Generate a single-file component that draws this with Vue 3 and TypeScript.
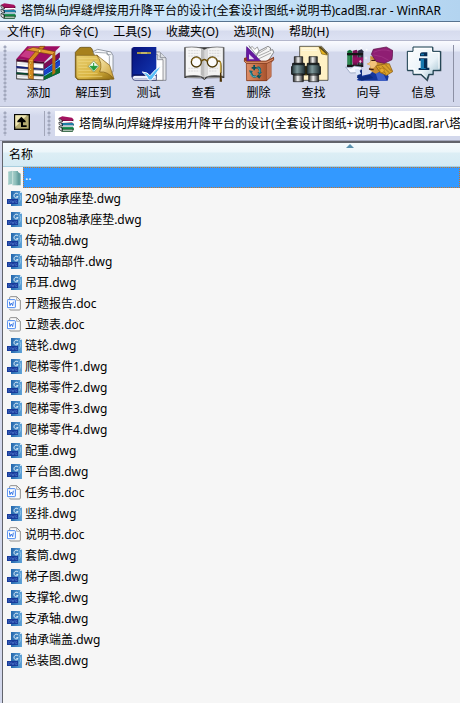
<script setup lang="ts">
interface Tool { id: string; label: string; box: string }
interface Entry { name: string; kind: 'dwg' | 'doc' }

const folder = '塔筒纵向焊缝焊接用升降平台的设计(全套设计图纸+说明书)cad图'
const title = `${folder}.rar - WinRAR`
const path = `${folder}.rar\\${folder}`
const menus: string[] = ['文件(F)', '命令(C)', '工具(S)', '收藏夹(O)', '选项(N)', '帮助(H)']
const tools: Tool[] = [
  { id: 'add', label: '添加', box: '42 18 144 114' },
  { id: 'extract', label: '解压到', box: '207 18 144 114' },
  { id: 'test', label: '测试', box: '27 18 144 114' },
  { id: 'view', label: '查看', box: '192 18 144 114' },
  { id: 'delete', label: '删除', box: '12 18 144 114' },
  { id: 'find', label: '查找', box: '177 18 144 114' },
  { id: 'wizard', label: '向导', box: '12 18 144 114' },
  { id: 'info', label: '信息', box: '177 18 144 114' },
]
const names: string[] = [
  '209轴承座垫.dwg', 'ucp208轴承座垫.dwg', '传动轴.dwg', '传动轴部件.dwg', '吊耳.dwg',
  '开题报告.doc', '立题表.doc', '链轮.dwg', '爬梯零件1.dwg', '爬梯零件2.dwg', '爬梯零件3.dwg',
  '爬梯零件4.dwg', '配重.dwg', '平台图.dwg', '任务书.doc', '竖排.dwg', '说明书.doc', '套筒.dwg',
  '梯子图.dwg', '支撑轮.dwg', '支承轴.dwg', '轴承端盖.dwg', '总装图.dwg',
]
const files: Entry[] = names.map((name) => ({ name, kind: name.endsWith('.doc') ? 'doc' : 'dwg' }))
</script>

<template>
  <div class="window">
    <!-- Shared pictures -->
    <svg class="defs" aria-hidden="true">
      <defs>
        <linearGradient id="g-steel" x1="0" x2="1" y1="0" y2="0">
          <stop offset="0" stop-color="#222" /><stop offset=".45" stop-color="#f4f4f4" /><stop offset="1" stop-color="#1c1c1c" />
        </linearGradient>
        <linearGradient id="g-teal" x1="0" x2="1" y1="0" y2="0">
          <stop offset="0" stop-color="#1c2c30" /><stop offset=".4" stop-color="#7f999c" /><stop offset="1" stop-color="#1b2a2e" />
        </linearGradient>
        <linearGradient id="g-folder" x1="0" x2="1" y1="0" y2="1">
          <stop offset="0" stop-color="#e8cf72" /><stop offset=".6" stop-color="#d8b33f" /><stop offset="1" stop-color="#8e6a10" />
        </linearGradient>
        <linearGradient id="g-flap" x1="0" x2="1" y1="0" y2="1">
          <stop offset="0" stop-color="#fff6c4" /><stop offset="1" stop-color="#c89a2c" />
        </linearGradient>
        <linearGradient id="g-navy" x1="0" x2="1" y1="0" y2="1">
          <stop offset="0" stop-color="#06107a" /><stop offset="1" stop-color="#1238b4" />
        </linearGradient>
        <linearGradient id="g-bin" x1="0" x2="1" y1="0" y2="0">
          <stop offset="0" stop-color="#e09068" /><stop offset="1" stop-color="#a8522c" />
        </linearGradient>
        <linearGradient id="g-info" x1="0" x2="1" y1="0" y2="1">
          <stop offset="0" stop-color="#fff" /><stop offset=".6" stop-color="#e8f2f8" /><stop offset="1" stop-color="#8fb4c4" />
        </linearGradient>
        <linearGradient id="g-dwg" x1="0" x2="1" y1="0" y2="0">
          <stop offset="0" stop-color="#2467ad" /><stop offset="1" stop-color="#5fa3d8" />
        </linearGradient>
        <linearGradient id="g-dir" x1="0" x2="1" y1="0" y2="0">
          <stop offset="0" stop-color="#a9d0cc" /><stop offset=".6" stop-color="#8dbdb9" /><stop offset="1" stop-color="#6aa3a2" />
        </linearGradient>
      </defs>
      <symbol id="books" viewBox="0 0 48 48">
        <path d="M2 6 13 1 42 5 46 10 44 19 12 17Z" fill="#a3125f" />
        <path d="M3 6 12 13 40 15 46 10V16L42 20 12 18Z" fill="#4c0728" />
        <path d="M14 15H46V19H14Z" fill="#fff" />
        <path d="M3 17 12 21H45L48 26 45 31H12L3 24Z" fill="#073c5a" />
        <path d="M14 22H46V26H14Z" fill="#2ba2cf" /><path d="M15 27H45V29H15Z" fill="#fff" />
        <path d="M3 30 12 34H45L48 39 44 47H13L3 40Z" fill="#06451c" />
        <path d="M14 34H46V38H14Z" fill="#17a156" /><path d="M14 41H44V44H14Z" fill="#fff" />
        <path d="M3 6 12 13V19L3 12ZM3 18 12 23V31L3 25ZM3 31 12 36V46L3 40Z" fill="#e8e8ec" stroke="#222" stroke-width="2" />
      </symbol>
      <symbol id="dwg" viewBox="0 0 48 48">
        <path d="M12 0H39L45 6V45H12Z" fill="url(#g-dwg)" />
        <path d="M39 0V6H45Z" fill="#d4e8f6" />
        <path d="M33 9C28 4 21 8 21 14C21 21 30 23 33 17H28" fill="none" stroke="#e6f3fc" stroke-width="3" />
        <path d="M37 8C42 15 42 25 37 32" fill="none" stroke="#8fc2ea" stroke-width="3" />
        <path d="M0 24H33V39H0Z" fill="#173a9a" />
        <path d="M5 28V35H8C12 34 12 29 8 28ZM14 28 16 35 18 30 20 35 22 28M30 29H26V35H30V32" fill="none" stroke="#5078cc" stroke-width="2" />
      </symbol>
      <symbol id="doc" viewBox="0 0 48 48">
        <path d="M8 10V5Q8 2 11 2H29L40 13V39Q40 42 37 42H11Q8 42 8 39" fill="#fbfbfb" stroke="#8c8c8c" stroke-width="3" />
        <path d="M29 2V13H40" fill="none" stroke="#8c8c8c" stroke-width="2" />
        <rect x="1" y="11" width="24" height="24" rx="2" fill="#fff" stroke="#4584ee" stroke-width="3" />
        <path d="M7 17 9 29 13 21 17 29 19 17" fill="none" stroke="#3475e8" stroke-width="3" />
      </symbol>
    </svg>

    <header class="titlebar">
      <svg class="small-icon" aria-hidden="true"><use href="#books" /></svg>
      <h1>{{ title }}</h1>
    </header>

    <nav class="menubar">
      <button v-for="menu in menus" :key="menu" type="button">{{ menu }}</button>
    </nav>

    <div class="toolbar" role="toolbar">
      <span class="grip"></span>
      <button v-for="tool in tools" :key="tool.id" class="tool" type="button">
        <svg :viewBox="tool.box" aria-hidden="true">
          <g v-if="tool.id === 'add'">
            <path d="M46 92 76 98 128 123 46 121Z" fill="#222" />
            <path d="M128 78 176 41V54L172 60 177 65V77L172 83 177 88V101L128 124Z" fill="#13208f" />
            <path d="M128 75 176 40V56L128 92Z" fill="#7c0c55" />
            <path d="M128 96 177 65V79L128 108Z" fill="#1743cc" /><path d="M128 112 177 84V101L128 124Z" fill="#0a6e32" />
            <path d="M130 93 174 62M130 110 174 84" stroke="#58c2ff" stroke-width="3" />
            <path d="M46 60 79 22H178L130 69Z" fill="#9d0d63" />
            <path d="M57 52 84 25H121L91 59Z" fill="#c73a85" />
            <path d="M46 60 130 69V77L46 68Z" fill="#4c042c" />
            <path d="M47 67 128 74V89L47 83Z" fill="#fff" stroke="#392531" stroke-width="2" />
            <path d="M46 81 128 90V96L46 88Z" fill="#101f7a" />
            <path d="M47 87 128 94V106L47 101Z" fill="#fff" stroke="#2b2b55" stroke-width="2" />
            <path d="M46 100 128 107V113L46 106Z" fill="#05472a" />
            <path d="M47 106 128 112V123L47 119Z" fill="#f7f7f7" stroke="#333" stroke-width="2" />
            <path d="M50 75H128M50 94H128M50 113H128" stroke="#c5c7d0" stroke-width="2" />
            <path d="M82 63 117 22H132L97 63V121L82 118Z" fill="#d88a1f" stroke="#744009" stroke-width="2" />
            <path d="M76 33 96 25 163 38 154 47Z" fill="#e59a32" stroke="#744009" stroke-width="2" />
            <path d="M154 47 163 38V102L154 108Z" fill="#b86c10" />
            <path d="M84 65H95M85 74V116" stroke="#ffc768" stroke-width="2" />
            <g fill="#ffe45e" stroke="#633600"><circle cx="89" cy="72" r="3" /><circle cx="89" cy="91" r="3" /><circle cx="89" cy="109" r="3" /><circle cx="116" cy="36" r="4" /></g>
          </g>

          <g v-else-if="tool.id === 'extract'">
            <path d="M223 40 234 28Q236 25 241 25H266Q271 25 273 30L277 39H325V122H230L223 115Z" fill="#a7811d" stroke="#5b4306" stroke-width="2" />
            <path d="M276 38 290 31 330 39 336 50V98L309 112Z" fill="#f6f8fb" stroke="#68707b" stroke-width="2" />
            <path d="M281 40 318 42 325 52V98" fill="#fff" stroke="#7d858e" stroke-width="2" />
            <path d="M318 36V47H331" fill="none" stroke="#808892" stroke-width="2" />
            <path d="M225 49H289L338 121H236Q225 121 225 108Z" fill="url(#g-folder)" stroke="#80601b" stroke-width="2" />
            <path d="M232 58H288M232 67H290M232 76H258M232 85H259M232 94H271M232 103H290M232 112H304" stroke="#f0da83" stroke-width="2" />
            <path d="M287 48 326 79 339 120Q320 96 296 99Q307 73 287 48Z" fill="url(#g-flap)" stroke="#7c5914" stroke-width="2" />
            <path d="M278 66 294 82 278 99 262 82Z" fill="#f4fff0" stroke="#6b8053" stroke-width="2" />
            <path d="M278 72V92M267 82 278 94 289 82Z" fill="#249c3d" stroke="#249c3d" stroke-width="3" />
          </g>

          <g v-else-if="tool.id === 'test'">
            <path d="M108 39H131L150 57V124H108Z" fill="#e9eaed" stroke="#656872" stroke-width="2" />
            <path d="M98 46H124L141 62V124H96Z" fill="#fff" stroke="#6a6a70" stroke-width="2" />
            <path d="M124 46V62H141M133 42V56H150" fill="#dce0e5" stroke="#70747d" stroke-width="2" />
            <path d="M48 30Q48 24 54 24H121V116H55Q48 116 48 109Z" fill="url(#g-navy)" />
            <path d="M50 115Q50 109 57 109H121V124H57Q50 124 49 116Z" fill="#eef0fb" stroke="#07104f" stroke-width="2" />
            <path d="M48 28V115M51 108H121" stroke="#030b55" stroke-width="3" />
            <path d="M55 119H118" stroke="#9ba5c8" stroke-width="2" />
            <path d="M63 42H105" stroke="#f1cf24" stroke-width="4" /><path d="M75 42H93" stroke="#fff7ac" stroke-width="2" />
            <path d="M79 99 93 102 102 110Q119 88 137 80L107 123H98Q92 108 79 99Z" fill="#58bef8" stroke="#fff" stroke-width="3" />
          </g>

          <g v-else-if="tool.id === 'view'">
            <path d="M205 25V117L258 118 265 123 272 118 325 117V25" fill="#343434" />
            <path d="M208 25Q249 21 265 32V116Q246 106 208 112Z" fill="#f6f6f6" stroke="#555" stroke-width="2" />
            <path d="M322 25Q282 21 265 32V116Q284 106 322 112Z" fill="#f2f2f2" stroke="#555" stroke-width="2" />
            <path d="M255 29 265 34V114L254 108Z" fill="#bbb" /><path d="M265 34 276 28V108L265 114Z" fill="#d8d8d8" />
            <g stroke="#c9c9cc" stroke-width="2" stroke-dasharray="6 2"><path d="M217 35H251M217 43H250M217 51H250M217 88H250M217 96H250M279 35H313M279 43H313M279 51H313M279 88H306M279 96H302" /></g>
            <path d="M211 115H256M274 115H319M265 32V120" stroke="#ddd" stroke-width="2" />
            <circle cx="241" cy="69" r="15" fill="#fff" fill-opacity=".65" stroke="#4c3909" stroke-width="4" />
            <circle cx="289" cy="69" r="15" fill="#fff" fill-opacity=".65" stroke="#4c3909" stroke-width="4" />
            <path d="M227 66A15 15 0 0 1 253 61M275 66A15 15 0 0 1 301 61" fill="none" stroke="#c6a248" stroke-width="2" />
            <path d="M256 67Q265 56 274 67M304 67Q315 62 315 80V102" fill="none" stroke="#6d500c" stroke-width="4" />
            <path d="M313 68V101" stroke="#e6bd35" stroke-width="2" /><path d="M312 101H316L318 128H311Z" fill="#4a3003" />
          </g>

          <g v-else-if="tool.id === 'delete'">
            <path d="M75 54 84 36 111 22 119 27 117 34 125 32 128 40 110 68H72Z" fill="#f5f5f5" stroke="#565656" stroke-width="2" />
            <path d="M83 43 108 28M82 51 116 36M84 59 120 42" stroke="#aaa" stroke-width="3" />
            <path d="M54 20 58 28 63 22 71 31 79 24 84 36 75 47Z" fill="#fff" stroke="#777" stroke-width="2" />
            <path d="M47 23 90 67H46Z" fill="#6719a0" stroke="#4b0b82" stroke-width="2" />
            <path d="M39 57 53 53 66 65H105L129 53V62L121 71V113L107 126H47V74L39 67Z" fill="#8c3d1f" />
            <path d="M49 30 88 67H47Z" fill="#6719a0" /><path d="M54 45 70 61H54Z" fill="#e5d8ef" />
            <path d="M46 73H107V125H47Z" fill="url(#g-bin)" stroke="#793316" stroke-width="2" />
            <path d="M107 74 121 66V112L107 124Z" fill="#c37350" />
            <path d="M40 62 47 67H106L128 57V63L108 73H46L40 67Z" fill="#df9069" stroke="#823c20" stroke-width="2" />
            <path d="M62 84H67V78H72V84H77V89H72V94H67V89H62Z" fill="#08525c" />
            <path d="M80 82Q93 84 90 99L94 98 86 107 79 100 84 99Q85 91 78 88Z" fill="#116878" />
            <path d="M54 94 66 96 63 100Q66 112 74 109L77 115Q62 120 57 102Z" fill="#116878" />
            <path d="M76 112 85 105V110L92 107 85 119Z" fill="#08525c" />
            <path d="M58 101Q62 117 76 112M82 86Q89 91 86 101" fill="none" stroke="#71cad3" stroke-width="2" />
          </g>

          <g v-else-if="tool.id === 'find'">
            <path d="M206 22H272L291 43V124H206Z" fill="#fff1c5" stroke="#1d1b13" stroke-width="2" />
            <path d="M264 23 289 48 272 45Z" fill="#e7b21c" stroke="#7e6310" stroke-width="2" />
            <path d="M263 24H271L289 42V48Z" fill="#564514" />
            <path d="M212 29H257M212 34H259" stroke="#fff9e0" stroke-width="3" />
            <path d="M218 82H230V108H218Z" fill="#c6ab0b" stroke="#111" stroke-width="2" />
            <path d="M222 86V104" stroke="#fff15a" stroke-width="3" />
            <path d="M190 53H215V74H190Z" fill="url(#g-steel)" stroke="#111" stroke-width="2" />
            <path d="M234 53H259V74H234Z" fill="url(#g-steel)" stroke="#111" stroke-width="2" />
            <path d="M185 73H220V80L223 83V106H182V83L185 79Z" fill="url(#g-teal)" stroke="#111" stroke-width="3" />
            <path d="M229 73H264V79L268 83V106H227V83L229 79Z" fill="url(#g-teal)" stroke="#111" stroke-width="3" />
            <path d="M187 105H217V128H187Z" fill="url(#g-steel)" stroke="#111" stroke-width="2" />
            <path d="M233 105H263V128H233Z" fill="url(#g-steel)" stroke="#111" stroke-width="2" />
            <path d="M188 108H217M233 108H262M187 77H218M232 77H262" stroke="#101719" stroke-width="3" />
          </g>

          <g v-else-if="tool.id === 'wizard'">
            <path d="M47 123 63 110 87 105 96 96 132 97 143 112 140 125H55Z" fill="#15369d" />
            <path d="M51 97 63 91V115L86 107 97 117 62 125 48 116Z" fill="#0c2b80" />
            <path d="M104 102 124 98 137 125H111Z" fill="#3e60c9" />
            <path d="M88 50 122 65 139 73 155 96 135 110 120 96 104 104 93 98 83 90 90 80 77 75 88 69Z" fill="#c88c32" />
            <path d="M91 59 108 65 107 80 96 88 87 90 90 81 79 75 89 69Z" fill="#f2c27b" />
            <path d="M104 81 126 76 145 74 155 98 137 109 118 101Z" fill="#d9a12b" stroke="#815412" stroke-width="2" />
            <path d="M112 84 135 104M122 80 146 102M134 78 152 97" stroke="#8d5c12" stroke-width="2" />
            <path d="M91 46 97 31 136 24 156 35 153 62 130 73 106 68Z" fill="#8f1e73" stroke="#551044" stroke-width="2" />
            <path d="M98 40Q122 28 148 36M98 48Q123 50 143 64" fill="none" stroke="#a5398a" stroke-width="2" />
            <path d="M91 64H103M84 90 98 92" stroke="#3c1c11" stroke-width="4" />
            <circle cx="123" cy="94" r="7" fill="#e7ac2f" stroke="#a56b10" stroke-width="2" />
            <path d="M19 36 27 32 34 37V82H19Z" fill="#117237" /><path d="M35 35 47 32 50 38V83H35Z" fill="#771052" />
            <path d="M50 35 62 31 67 37V84H50Z" fill="#2b2d42" />
            <path d="M18 42H66V49H18ZM18 77H66V84H18Z" fill="#161616" />
            <path d="M24 51V77M57 50V77" stroke="#52a16e" stroke-width="3" /><path d="M35 55H66V71H35Z" fill="#921060" />
            <path d="M14 84 30 87 40 81 61 84 63 89 48 101 28 102Z" fill="#f5f7ff" stroke="#8292b0" stroke-width="2" />
            <path d="M41 91 54 90 60 105 47 109Z" fill="#dce7f9" />
            <path d="M60 24V30M57 27H63M77 29V35M74 32H80M75 53V61M71 57H79M58 63V72M54 67H62" stroke="#fff" stroke-width="2" />
          </g>

          <g v-else>
            <path d="M217 25H277V37H301V97H278V109H266L260 128 239 109H217V97H199V37H217Z" fill="#43545f" />
            <path d="M216 24H275V37H298V94H276V106H263L258 122 241 106H216V94H199V37H216Z" fill="url(#g-info)" stroke="#173c4c" stroke-width="3" />
            <path d="M220 29H271V41H294V89" fill="none" stroke="#fff" stroke-width="3" />
            <path d="M204 89H221V101H243L255 114" fill="none" stroke="#fff" stroke-width="2" />
            <path d="M237 44Q239 40 246 40H259V52H237ZM234 58H259V86H265V93H233V87H240V65H234Z" fill="#052d55" />
            <path d="M240 44H249V49H240ZM239 60H249V87H254V90H239Z" fill="#1578af" />
          </g>
        </svg>
        <span>{{ tool.label }}</span>
      </button>
      <span class="divider"></span>
    </div>

    <div class="addressbar">
      <span class="grip"></span>
      <button class="up" type="button" aria-label="上一级">
        <svg viewBox="0 0 48 48" aria-hidden="true">
          <rect width="48" height="48" fill="#080805" />
          <path d="M4 4H44V44H4Z" fill="#b4aa70" /><path d="M4 4H39L4 39Z" fill="#eee6b3" />
          <path d="M22 8 35 21V25H27V34H38V39H21V25H10V21Z" fill="#000" />
        </svg>
      </button>
      <span class="grip"></span>
      <label class="path">
        <svg class="small-icon" aria-hidden="true"><use href="#books" /></svg>
        <input type="text" :value="path" aria-label="路径" />
      </label>
    </div>

    <main class="list">
      <table>
        <thead>
          <tr>
            <th scope="col">名称<span class="sort"></span></th>
          </tr>
        </thead>
        <tbody>
          <tr class="selected">
            <td>
              <div class="row">
                <svg class="file-icon" viewBox="0 0 48 48" aria-hidden="true">
                  <path d="M3 5 16 2V42L3 44Z" fill="#9bc7c4" /><path d="M16 3H33V46H16Z" fill="url(#g-dir)" />
                  <path d="M33 6 41 11V46H33Z" fill="#659e9e" /><path d="M17 7V42M5 7V41" stroke="#cce5e0" stroke-width="2" />
                </svg>
                <span class="name">..</span>
              </div>
            </td>
          </tr>
          <tr v-for="file in files" :key="file.name">
            <td>
              <div class="row">
                <svg class="file-icon" aria-hidden="true"><use :href="'#' + file.kind" /></svg>
                <span class="name">{{ file.name }}</span>
              </div>
            </td>
          </tr>
        </tbody>
      </table>
    </main>
  </div>
</template>

<style>
body {
  background: #f6f6f6;
}
</style>

<style scoped>
.window {
  display: flex;
  flex-direction: column;
  min-height: 100vh;
  overflow: hidden;
  background: #d3d8ec;
  color: #000;
  font: 12px/16px "Noto Sans", "Noto Sans CJK SC", sans-serif;
}
.window * {
  box-sizing: border-box;
}
.defs {
  position: absolute;
  width: 0;
  height: 0;
}
button,
input {
  margin: 0;
  padding: 0;
  border: 0;
  background: none;
  color: inherit;
  font: inherit;
}
.small-icon {
  flex: none;
  width: 16px;
  height: 16px;
}
.titlebar {
  display: flex;
  align-items: center;
  gap: 5px;
  height: 22px;
  border-bottom: 1px solid #57738f;
  background: linear-gradient(90deg, #d9eaf8, #c8e4f9 50%, #b3d4f0);
}
h1 {
  margin: 0;
  overflow: hidden;
  font-size: 12px;
  font-weight: 400;
  white-space: nowrap;
}
.menubar {
  display: flex;
  gap: 15px;
  height: 19px;
  padding: 2px 7px 0;
  border-bottom: 1px solid #b4b7cc;
  background: linear-gradient(#fcfdff, #e6eaf6 45%, #d6dbee 50%, #dde2f3);
  white-space: nowrap;
}
.toolbar {
  display: flex;
  height: 66px;
  padding: 4px 3px;
  border-bottom: 1px solid #b6bbcd;
  background: linear-gradient(#fafbff, #e6eaf6 10px, #d3d8ec 11px);
}
.grip {
  flex: none;
  width: 4px;
  margin-right: 4px;
  background: radial-gradient(circle at 2px 2px, #a2a8bd 1px, transparent 2px) 0 0 / 4px 4px;
}
.tool {
  display: flex;
  flex: none;
  flex-direction: column;
  gap: 2px;
  align-items: center;
  width: 55px;
}
.tool svg {
  width: 48px;
  height: 38px;
}
.tool span {
  white-space: nowrap;
}
.divider {
  width: 1px;
  margin-left: 2px;
  background: #8c90a4;
}
.addressbar {
  display: flex;
  height: 34px;
  padding: 3px 0 4px 3px;
  border-top: 1px solid #fafbff;
  border-bottom: 1px solid #a5a9bd;
  background: linear-gradient(#e2e6f4, #d3d8ec 8px);
}
.up {
  display: flex;
  flex: none;
  align-items: flex-start;
  width: 34px;
  margin-right: 2px;
  padding: 3px 0 0 3px;
  border-right: 1px solid #a2a6b9;
}
.up svg {
  width: 16px;
  height: 16px;
}
.path {
  display: flex;
  flex: 1;
  align-items: center;
  gap: 5px;
  min-width: 0;
  padding-left: 3px;
  background: #fff;
}
.path input {
  flex: 1;
  min-width: 0;
  outline: 0;
}
.list {
  flex: 1;
  margin-left: 2px;
  border-top: 2px solid #62646c;
  border-left: 1px solid #62646c;
  background: #f6f6f6;
}
table {
  width: 100%;
  border-spacing: 0;
}
th {
  position: relative;
  height: 24px;
  padding: 0 6px;
  border-bottom: 1px solid #a9cfdf;
  background: linear-gradient(#f4fafd, #ecf6fa 9px, #dceef5 10px, #d5eaf3);
  font-weight: 400;
  text-align: left;
}
.sort {
  position: absolute;
  top: 1px;
  right: 106px;
  border: 4px solid transparent;
  border-top: 0;
  border-bottom-color: #5a91ae;
}
td {
  padding: 0;
}
.row {
  display: flex;
  align-items: center;
  height: 21px;
  padding-left: 4px;
}
.file-icon {
  flex: none;
  width: 16px;
  height: 16px;
}
.name {
  flex: 1;
  padding-left: 2px;
  white-space: nowrap;
}
.selected .name {
  height: 21px;
  padding-left: 1px;
  border: 1px dotted #c8742a;
  background: #3399ff;
  color: #fff;
}
</style>
